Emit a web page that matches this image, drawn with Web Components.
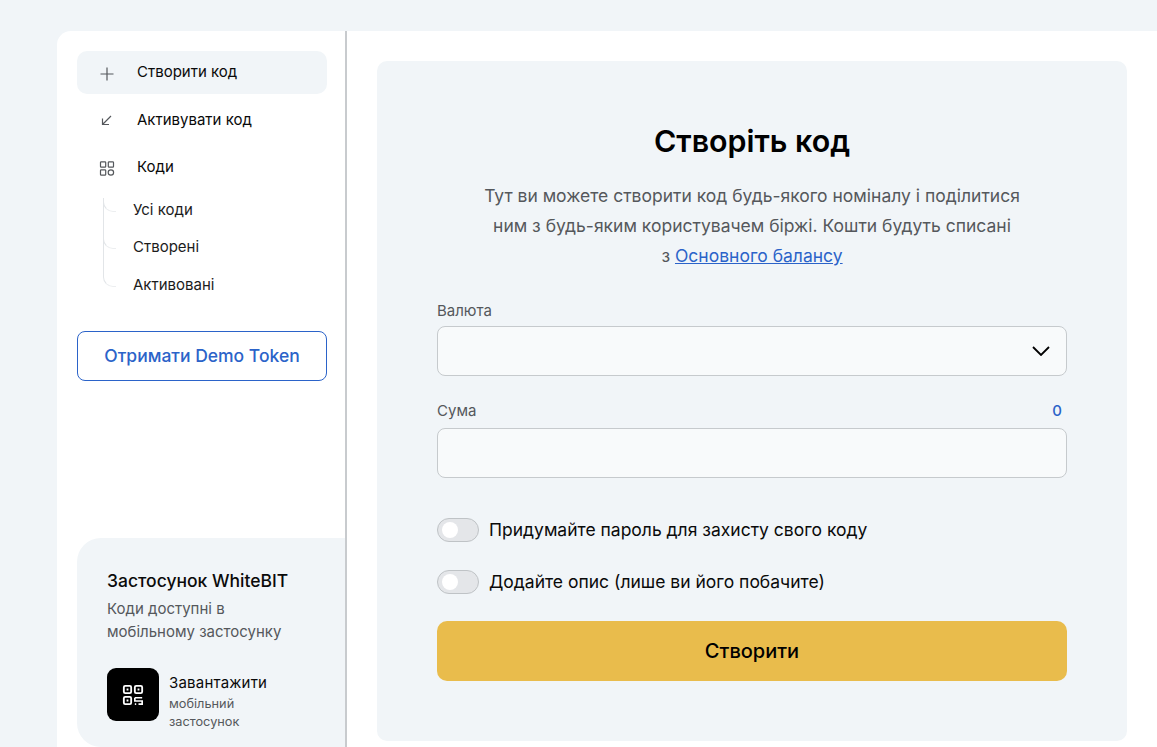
<!DOCTYPE html>
<html lang="uk">
<head>
<meta charset="utf-8">
<title>Коди</title>
<style>
  html, body { margin: 0; height: 100%; }
  body {
    background: #f1f5f8;
    font-family: Inter, "Noto Sans", sans-serif;
    color: #0a0a0a;
    overflow: hidden;
  }
</style>
</head>
<body>
<code-page>
  <side-nav slot="side">
    <nav-item active label="Створити код">
      <svg slot="icon" width="16" height="16" viewBox="0 0 16 16" fill="none" stroke="#55585c" stroke-width="1.2"><path d="M8 1.5v13M1.5 8h13"/></svg>
    </nav-item>
    <nav-item label="Активувати код">
      <svg slot="icon" width="16" height="16" viewBox="0 0 16 16" fill="none" stroke="#55585c" stroke-width="1.2"><path d="M12 3 3.5 11.5M3.5 5.5v6H10"/></svg>
    </nav-item>
    <nav-item label="Коди">
      <svg slot="icon" width="16" height="16" viewBox="0 0 16 16" fill="none" stroke="#55585c" stroke-width="1.2"><rect x="1.5" y=".8" width="5.2" height="5.4" rx=".8"/><rect x="9.3" y=".8" width="5.2" height="5.4" rx=".8"/><rect x="1.5" y="8.8" width="5.2" height="5.4" rx=".8"/><circle cx="11.9" cy="11.5" r="2.7"/></svg>
    </nav-item>
    <sub-nav>
      <sub-item>Усі коди</sub-item>
      <sub-item>Створені</sub-item>
      <sub-item>Активовані</sub-item>
    </sub-nav>
    <demo-button>Отримати Demo Token</demo-button>
    <app-card></app-card>
  </side-nav>
  <create-form></create-form>
</code-page>

<script>
class CodePage extends HTMLElement {
  constructor() {
    super();
    this.attachShadow({ mode: 'open' });
    this.shadowRoot.innerHTML = `
      <style>
        :host { display: block; padding: 31px 0 0 57px; box-sizing: border-box; height: 747px; }
        .shell {
          display: flex;
          height: 100%;
          background: #fff;
          border-top-left-radius: 14px;
        }
        main { flex: 1; padding: 30px 30px 0 30px; min-width: 0; }
      </style>
      <div class="shell">
        <slot name="side"></slot>
        <main><slot></slot></main>
      </div>
    `;
  }
}

class SideNav extends HTMLElement {
  constructor() {
    super();
    this.attachShadow({ mode: 'open' });
    this.shadowRoot.innerHTML = `
      <style>
        :host {
          display: flex;
          flex-direction: column;
          flex: none;
          box-sizing: border-box;
          width: 290px;
          padding: 20px 0 0 20px;
          border-right: 2px solid #c8cbce;
        }
      </style>
      <slot></slot>
    `;
  }
}

class NavItem extends HTMLElement {
  constructor() {
    super();
    this.attachShadow({ mode: 'open' });
  }

  connectedCallback() {
    this.render();
  }

  render() {
    const label = this.getAttribute('label') || '';
    this.shadowRoot.innerHTML = `
      <style>
        :host {
          display: flex;
          align-items: center;
          box-sizing: border-box;
          width: 250px;
          height: 43px;
          margin-bottom: 4.5px;
          padding-left: 22px;
          gap: 22px;
          border-radius: 10px;
          font-size: 15px;
        }
        :host([active]) { background: #f1f5f8; }
        .icon { display: flex; width: 16px; height: 16px; position: relative; top: 1px; }
        .label { position: relative; top: -1px; }
      </style>
      <span class="icon"><slot name="icon"></slot></span>
      <span class="label">${label}</span>
    `;
  }
}

class SubNav extends HTMLElement {
  constructor() {
    super();
    this.attachShadow({ mode: 'open' });
    this.shadowRoot.innerHTML = `
      <style>
        :host { display: block; margin: -3px 0 28px 26px; }
      </style>
      <slot></slot>
    `;
  }
}

class SubItem extends HTMLElement {
  constructor() {
    super();
    this.attachShadow({ mode: 'open' });
    this.shadowRoot.innerHTML = `
      <style>
        :host {
          display: flex;
          align-items: center;
          height: 37.5px;
          padding-left: 30px;
          position: relative;
          font-size: 15px;
          color: #1c1c1c;
        }
        /* the line runs up behind the previous item's curve */
        .line {
          position: absolute;
          left: 0;
          top: -27px;
          width: 13px;
          height: 48px;
          box-sizing: border-box;
          border-left: 1px solid #e2e5e8;
          border-bottom: 1px solid #eceef0;
          border-bottom-left-radius: 10px;
        }
        :host(:first-child) .line { top: 7px; height: 14px; }
      </style>
      <span class="line"></span>
      <slot></slot>
    `;
  }
}

class DemoButton extends HTMLElement {
  constructor() {
    super();
    this.attachShadow({ mode: 'open' });
    this.shadowRoot.innerHTML = `
      <style>
        :host {
          display: flex;
          align-items: center;
          justify-content: center;
          box-sizing: border-box;
          width: 250px;
          height: 50px;
          padding-bottom: 1px;
          border: 1px solid #2b63c9;
          border-radius: 8px;
          color: #2b63c9;
          font-size: 17.5px;
          font-weight: 500;
        }
      </style>
      <slot></slot>
    `;
  }
}

class AppCard extends HTMLElement {
  constructor() {
    super();
    this.attachShadow({ mode: 'open' });
    this.shadowRoot.innerHTML = `
      <style>
        :host {
          display: block;
          box-sizing: border-box;
          margin-top: auto;
          height: 209px;
          padding: 33px 0 0 30px;
          background: #f1f5f8;
          border-radius: 24px 0 0 24px;
        }
        h3 { margin: 0 0 6px; font-size: 17.5px; font-weight: 500; line-height: 20px; }
        p { margin: 0; font-size: 15px; line-height: 23px; color: #55585c; }
        .download { display: flex; gap: 10px; margin-top: 25px; }
        .qr {
          display: flex;
          align-items: center;
          justify-content: center;
          width: 52px;
          height: 53px;
          border-radius: 9px;
          background: #000;
        }
        .title { font-size: 15px; line-height: 18px; margin-top: 6px; letter-spacing: .2px; }
        .sub { font-size: 12.75px; line-height: 18px; color: #55585c; margin-top: 3px; }
      </style>
      <h3>Застосунок WhiteBIT</h3>
      <p>Коди доступні в<br>мобільному застосунку</p>
      <div class="download">
        <div class="qr">
          <svg width="22" height="22" viewBox="0 0 24 24" fill="none" stroke="#fff" stroke-width="2">
            <rect x="2" y="2" width="8" height="8" rx="1.5"/>
            <rect x="14" y="2" width="8" height="8" rx="1.5"/>
            <rect x="2" y="14" width="8" height="8" rx="1.5"/>
            <path d="M14 15h8M14 15v3.5h8v3.5h-4M14 22h1.5" stroke-width="1.8"/>
            <path d="M5 5h2v2H5zM17 5h2v2h-2zM5 17h2v2H5z" fill="#fff" stroke="none"/>
          </svg>
        </div>
        <div>
          <div class="title">Завантажити</div>
          <div class="sub">мобільний<br>застосунок</div>
        </div>
      </div>
    `;
  }
}

class FormField extends HTMLElement {
  constructor() {
    super();
    this.attachShadow({ mode: 'open' });
  }

  connectedCallback() {
    const label = this.getAttribute('label') || '';
    const value = this.getAttribute('value');
    this.shadowRoot.innerHTML = `
      <style>
        :host { display: block; }
        .head {
          display: flex;
          justify-content: space-between;
          align-items: center;
          height: 16px;
          margin-bottom: 8px;
          font-size: 15px;
          color: #55585c;
        }
        .head.has-value { margin-bottom: 10px; }
        .value { color: #2b63c9; font-weight: 500; padding-right: 5px; }
        .box {
          display: flex;
          align-items: center;
          justify-content: flex-end;
          box-sizing: border-box;
          height: 50px;
          padding-right: 16px;
          background: #f8fafb;
          border: 1px solid #c6cacd;
          border-radius: 8px;
        }
      </style>
      <div class="head ${value ? 'has-value' : ''}"><span>${label}</span>${value ? `<span class="value">${value}</span>` : ''}</div>
      <div class="box"><slot></slot></div>
    `;
  }
}

class ToggleRow extends HTMLElement {
  constructor() {
    super();
    this.attachShadow({ mode: 'open' });
    this.shadowRoot.innerHTML = `
      <style>
        :host {
          display: flex;
          align-items: center;
          gap: 10px;
          height: 24px;
          font-size: 17.5px;
          color: #0a0a0a;
        }
        .track {
          flex: none;
          box-sizing: border-box;
          width: 42px;
          height: 24px;
          padding: 3px 4px;
          border: 1px solid #bfc3c6;
          border-radius: 12px;
          background: #e4e6e9;
        }
        .knob { width: 16px; height: 16px; border-radius: 50%; background: #fff; }
        .text { position: relative; top: -1px; }
      </style>
      <div class="track"><div class="knob"></div></div>
      <span class="text"><slot></slot></span>
    `;
  }
}

class CreateForm extends HTMLElement {
  constructor() {
    super();
    this.attachShadow({ mode: 'open' });
    this.shadowRoot.innerHTML = `
      <style>
        :host {
          display: block;
          box-sizing: border-box;
          width: 750px;
          height: 680px;
          padding: 60px 60px 0;
          background: #f1f5f8;
          border-radius: 10px;
        }
        h1 { margin: 0; text-align: center; font-size: 30.4px; font-weight: 600; line-height: 40px; color: #000; }
        .intro {
          margin: 20px 0 31px;
          text-align: center;
          font-size: 17.5px;
          line-height: 30px;
          color: #55585c;
        }
        .intro a { color: #2b63c9; text-decoration: underline; }
        form-field { margin-bottom: 26px; }
        .toggles { display: flex; flex-direction: column; gap: 28px; margin-top: 40px; }
        .submit {
          display: flex;
          align-items: center;
          justify-content: center;
          height: 60px;
          margin-top: 27px;
          background: #e9bc4c;
          border-radius: 10px;
          font-size: 20px;
          font-weight: 500;
          color: #000;
        }
      </style>
      <h1>Створіть код</h1>
      <p class="intro">Тут ви можете створити код будь-якого номіналу і поділитися<br>ним з будь-яким користувачем біржі. Кошти будуть списані<br>з <a>Основного балансу</a></p>
      <form-field label="Валюта">
        <svg width="18" height="10" viewBox="0 0 18 10" fill="none" stroke="#000" stroke-width="1.8"><path d="M1 1l8 8 8-8"/></svg>
      </form-field>
      <form-field label="Сума" value="0"></form-field>
      <div class="toggles">
        <toggle-row>Придумайте пароль для захисту свого коду</toggle-row>
        <toggle-row>Додайте опис (лише ви його побачите)</toggle-row>
      </div>
      <div class="submit">Створити</div>
    `;
  }
}

customElements.define('code-page', CodePage);
customElements.define('side-nav', SideNav);
customElements.define('nav-item', NavItem);
customElements.define('sub-nav', SubNav);
customElements.define('sub-item', SubItem);
customElements.define('demo-button', DemoButton);
customElements.define('app-card', AppCard);
customElements.define('form-field', FormField);
customElements.define('toggle-row', ToggleRow);
customElements.define('create-form', CreateForm);
</script>
</body>
</html>
